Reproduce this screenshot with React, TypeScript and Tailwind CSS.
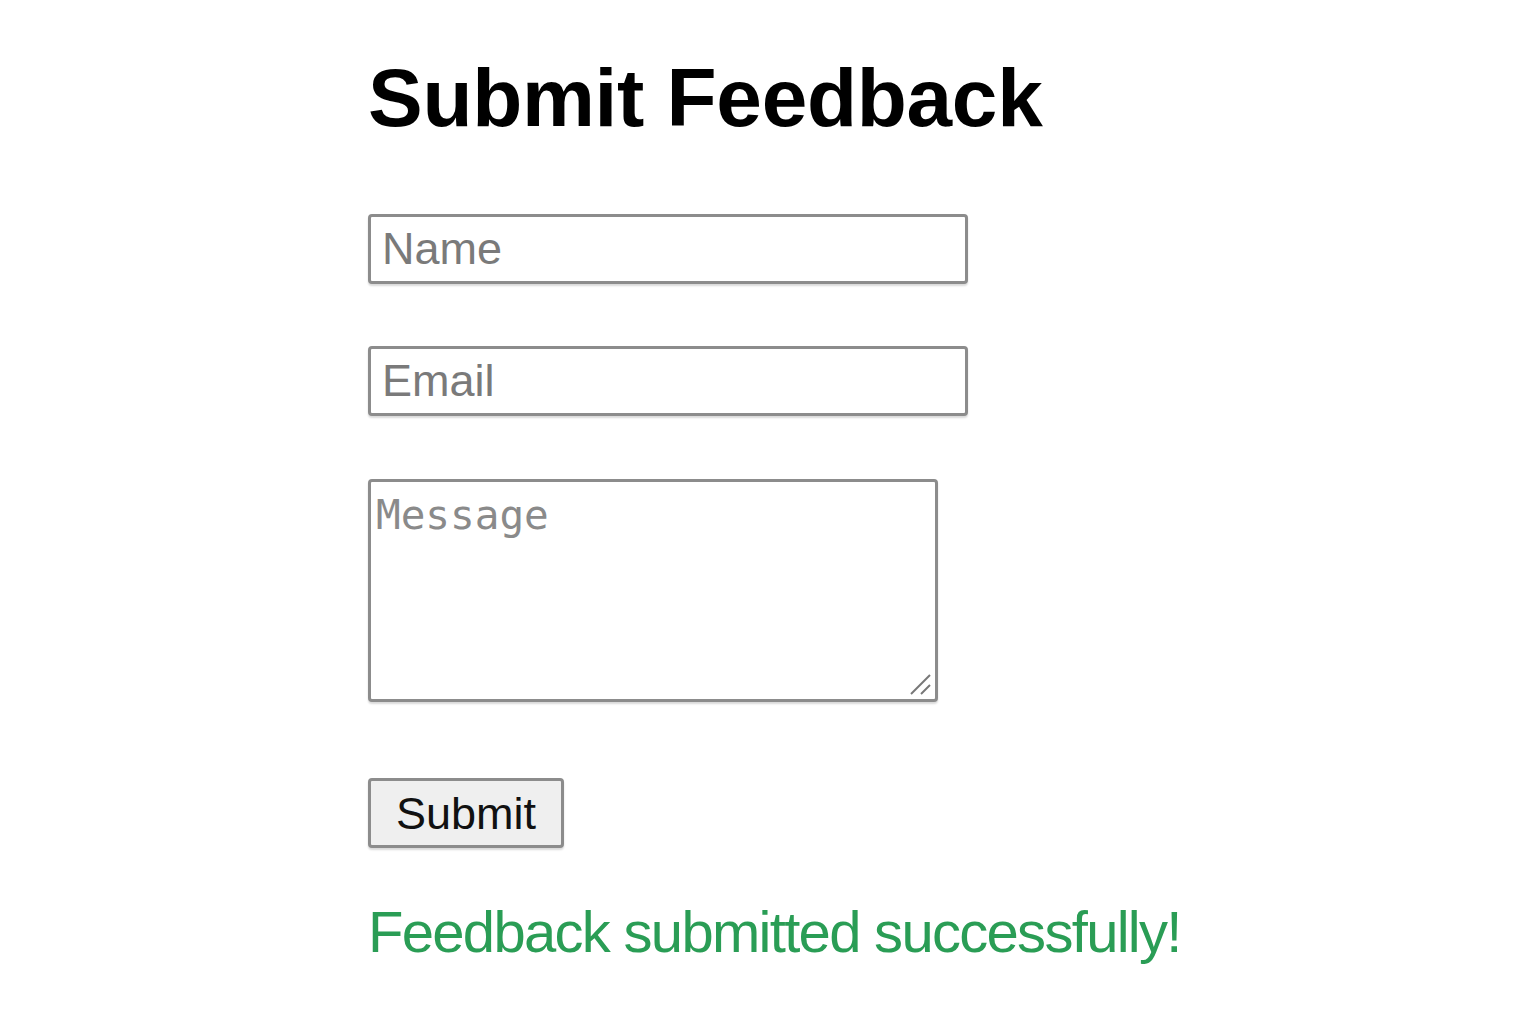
import React from "react";

export default function App() {
  return (
    <div className="min-h-[1026px] w-full bg-white" style={{ fontFamily: '"Liberation Sans", Arial, sans-serif' }}>
      <div className="flex flex-col items-start pl-[368px] pt-[57px]">
        <h1 className="m-0 text-[82px] font-bold leading-none text-black tracking-[-0.3px]">Submit Feedback</h1>

        <input
          type="text"
          placeholder="Name"
          className="mt-[75px] box-border h-[70px] w-[600px] rounded-[4px] border-[3px] border-[#8c8c8c] bg-white px-[11px] text-[45px] leading-none text-black shadow-[0_2px_2px_rgba(0,0,0,0.15)] outline-none placeholder:text-[#7a7a7a]"
        />

        <input
          type="email"
          placeholder="Email"
          className="mt-[62px] box-border h-[70px] w-[600px] rounded-[4px] border-[3px] border-[#8c8c8c] bg-white px-[11px] text-[45px] leading-none text-black shadow-[0_2px_2px_rgba(0,0,0,0.15)] outline-none placeholder:text-[#7a7a7a]"
        />

        <div className="relative mt-[63px]">
          <textarea
            placeholder="Message"
            className="box-border block h-[223px] w-[570px] resize-none rounded-[4px] border-[3px] border-[#8c8c8c] bg-white px-[5px] pt-[13px] text-[41px] leading-none text-black shadow-[0_2px_2px_rgba(0,0,0,0.15)] outline-none placeholder:text-[#8a8a8a]"
            style={{ fontFamily: '"DejaVu Sans Mono", "Liberation Mono", monospace' }}
          />
          <svg className="pointer-events-none absolute bottom-[6px] right-[6px]" width="24" height="24" viewBox="0 0 24 24">
            <line x1="3" y1="22" x2="22" y2="3" stroke="#777" strokeWidth="2" />
            <line x1="13" y1="22" x2="22" y2="13" stroke="#777" strokeWidth="2" />
          </svg>
        </div>

        <button
          type="button"
          className="mt-[76px] box-border h-[70px] w-[196px] rounded-[4px] border-[3px] border-[#8c8c8c] bg-[#efefef] text-[45px] leading-none text-[#111] shadow-[0_2px_2px_rgba(0,0,0,0.15)]"
        >
          Submit
        </button>

        <p className="m-0 mt-[55px] text-[58px] leading-none tracking-[-1.7px] text-[#2a9d55]">Feedback submitted successfully!</p>
      </div>
    </div>
  );
}
